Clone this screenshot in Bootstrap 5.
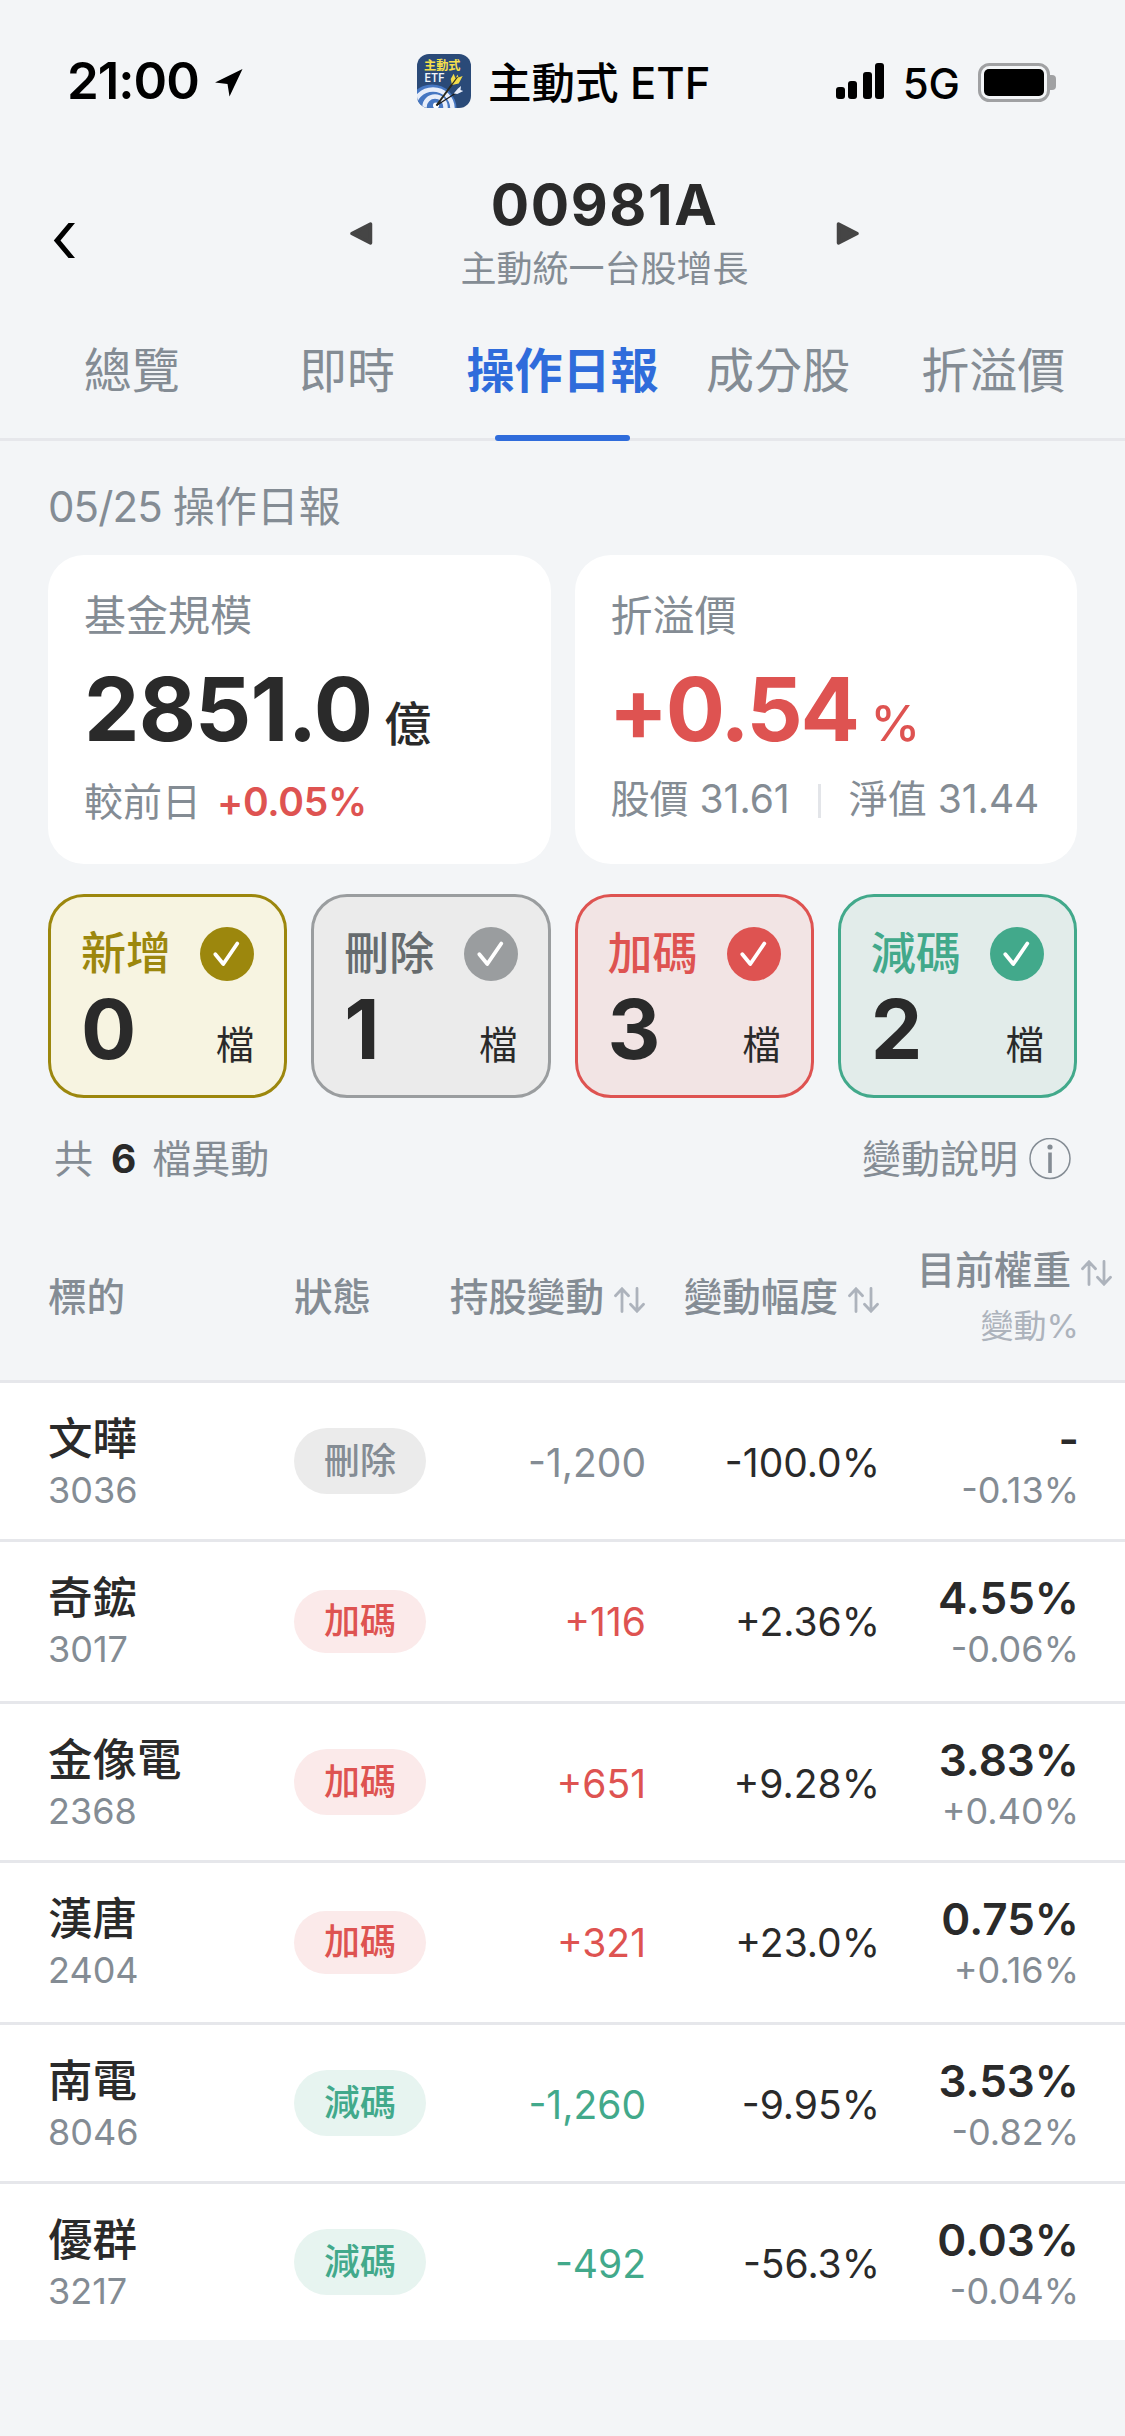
<!DOCTYPE html>
<html lang="zh-Hant">
<head>
<meta charset="utf-8">
<meta name="viewport" content="width=device-width, initial-scale=1">
<title>00981A 操作日報</title>
<link href="https://cdn.jsdelivr.net/npm/bootstrap@5.3.0/dist/css/bootstrap.min.css" rel="stylesheet">
<style>
:root{--ink:#2a2a2a;--muted:#848c94;--faint:#adb3bc;--line:#e6e7eb;--blue:#2f6cdb;--red:#de5351;--green:#42a98b}
body{width:1125px;min-height:2436px;background:#f3f5f7;color:var(--ink);font-family:Inter,"Noto Sans CJK TC",sans-serif;overflow-x:hidden}
svg{display:block;flex:none}
.tone-muted{color:var(--muted)}.tone-red{color:var(--red)}.tone-green{color:var(--green)}
.statusbar{height:162px;color:#000}
.clock{font-size:51px;font-weight:600;line-height:60px;width:130px;margin-left:67px;letter-spacing:-1px}
.locate{margin:4px 0 0 18px}
.appicon{margin-left:174px}
.appname{font-size:43.5px;font-weight:500;line-height:60px;margin:4px 0 0 17px}
.indicators{margin-right:69px}
.net{font-size:42px;font-weight:500;line-height:60px;margin:5px 18px 0 19px}
.battery{margin-top:2px}
.titlebar{height:142px}
.back{margin:61px 0 0 53px}
.prev{margin:60px 0 0 275px}
.next{margin:60px 266px 0 0}
.fundcode{font-size:57px;font-weight:700;line-height:62px;letter-spacing:1.6px}
.fundname{font-size:36px;line-height:50px;margin-top:8px;color:var(--muted)}
.tabs{height:137px;border-bottom:3px solid var(--line);padding:0 24px}
.tabs .nav-link{height:137px;padding:37px 0 0;font-size:48px;line-height:60px;color:var(--muted);position:relative;white-space:nowrap}
.tabs .nav-link.active{color:var(--blue);font-weight:700}
.tabs .nav-link.active::after{content:"";position:absolute;left:50%;bottom:0;width:135px;height:6px;margin-left:-68px;border-radius:3px;background:var(--blue)}
.page{padding:41px 48px 0}
.day{font-size:42px;line-height:50px;color:var(--muted);margin-bottom:23px}
.day-num{letter-spacing:-.9px}
.gap24{gap:24px}
.tiles{margin-top:30px}
.panel{height:309px;background:#fff;border-radius:36px;padding:37px 0 0 36px;flex:1 1 0;min-width:0}
.panel-label{font-size:42px;line-height:48px;color:var(--muted)}
.figure-num{height:90px;font-size:88px;font-weight:700;line-height:90px;margin-top:24px;letter-spacing:-.8px;white-space:nowrap}
.figure-num .unit{font-size:47px;font-weight:500;line-height:1;margin-left:12px;letter-spacing:0}
.premium{letter-spacing:-2.4px;margin-left:-2px}
.premium .unit{font-size:50px;margin-left:13px}
.sub{font-size:39px;line-height:48px;color:var(--muted);white-space:nowrap}
.sub-scale{margin-top:24px}
.sub-scale b{font-weight:600;color:var(--red);margin-left:16px;letter-spacing:-.3px}
.sub-price{margin-top:21px}
.sep{width:3px;height:34px;background:#e3e5e9;margin:3px 28px 0}
.tile{flex:1 1 0;height:204px;border:3px solid var(--c);background:var(--b);border-radius:36px;padding:30px 30px 0 30px}
.tile svg{color:var(--c)}
.tile-new{--c:#9c870d;--b:#f7f4e1}
.tile-del{--c:#9a9d9f;--b:#ebebeb;--t:#666b6e}
.tile-add{--c:#de5351;--b:#f2e4e4}
.tile-cut{--c:#42a98b;--b:#e2ecea}
.tile-label{font-size:45px;font-weight:500;line-height:54px;color:var(--t,var(--c))}
.tile-num{font-size:82px;font-weight:700;line-height:81px}
.tile-unit{font-size:38.5px;line-height:48px;padding-top:32px}
.summary{margin:37px 6px 0 6px}
.summary b{color:var(--ink);margin:0 16px 0 18px}
.info{margin-left:11px}
.thead-line{height:203px;border-bottom:3px solid var(--line);margin-top:-3px;padding:0 48px;font-size:38.6px;font-weight:500;line-height:48px;color:var(--muted)}
.head-mid{padding-top:93px}
.head-top{padding-top:66px}
.head-out{margin-right:-34px}
.head-sub{font-size:33px;line-height:40px;margin-top:12px;color:var(--faint)}
.sorter{margin:14px 0 0 10px}
.c1{width:246px}.c2{width:132px}.c3{width:220px}.c4{width:234px}.c5{width:199px}
.c1,.c2,.c3,.c4,.c5{flex:none;white-space:nowrap}
.line{height:159px;background:#fff;border-bottom:3px solid var(--line);padding:0 46px 0 48px}
.line:nth-child(odd){height:162px}
.line:last-child{height:156px;border:0}
.stock{font-size:44.5px;font-weight:500;line-height:50px;padding-top:31px}
.code{font-size:36px;line-height:44px;margin-top:4px;color:var(--muted)}
.pill{display:block;width:132px;height:66px;border-radius:33px;margin-top:45px;text-align:center;font-size:36px;font-weight:500;line-height:66px}
.line:nth-child(odd):not(:last-child) .pill{margin-top:48px;height:63px;line-height:63px}
.pill-del{background:#ebebeb;color:var(--muted)}.pill-add{background:#fbeaea;color:var(--red)}.pill-cut{background:#e7f4f0;color:var(--green)}
.val{font-size:39px;line-height:48px;padding-top:56px;text-align:right}
.wt{font-size:44px;font-weight:600;line-height:50px;padding-top:31px;text-align:right}
</style>
</head>
<body>
<svg width="0" height="0" class="position-absolute">
<symbol id="tick" viewBox="0 0 54 54"><circle cx="27" cy="27" r="27" fill="currentColor"/><path d="M15.3 27.2 23.3 37 37.3 16.5" fill="none" stroke="#fff" stroke-width="3.8" stroke-linecap="round" stroke-linejoin="round"/></symbol>
<symbol id="sort" viewBox="0 0 32 26"><path d="M8 24.500V2M1.500 8.800 8 1.800l6.500 7M23 1.500V24M16.500 17.200 23 24.200l6.500-7" fill="none" stroke="#adb3bc" stroke-width="2.800" stroke-linecap="round"/></symbol>
</svg>

<header class="statusbar d-flex align-items-center">
  <div class="clock">21:00</div>
  <svg class="locate" width="28" height="28" viewBox="0 0 28 28"><path d="M27.500 0 0 13.500 12.500 15 14.500 27.500z"/></svg>
  <svg class="appicon" width="54" height="54" viewBox="0 0 54 54"><defs><clipPath id="ico"><rect width="54" height="54" rx="12"/></clipPath></defs>
    <g clip-path="url(#ico)"><rect width="54" height="54" fill="#2a4a78"/>
    <circle cx="15" cy="55" r="24.500" fill="#4677c2"/><circle cx="16" cy="55" r="19.500" fill="none" stroke="#e8eefa" stroke-width="4.500"/><circle cx="18" cy="53" r="10.500" fill="none" stroke="#e8eefa" stroke-width="4.500"/><circle cx="19" cy="51.500" r="3" fill="#fff"/>
    <path d="M19.500 51.500 39 25" stroke="#2b2a1c" stroke-width="2"/><path d="M19.500 51.500 42 37" stroke="#1d1d1d" stroke-width="1.300"/>
    <path d="M36.700 19.700 38.500 24.500 40.500 20.500 41.500 23.500 45.700 22 41.700 29.500 35 31 33.700 25z" fill="#f4dd4a"/><path d="M44 32 43.500 36 46.300 37 40.300 40 36.700 39.500 41 34.500z" fill="#e8eefa"/>
    <path d="M33 33.200 40.500 23" stroke="#2b2a1c" stroke-width="1.200"/>
    <text x="7" y="15.500" font-size="12.200" font-weight="700" fill="#f7e04b">主動式</text><text x="7.500" y="27.500" font-size="12" font-weight="600" fill="#f2f5fa" textLength="20" lengthAdjust="spacingAndGlyphs">ETF</text></g></svg>
  <div class="appname">主動式 ETF</div>
  <div class="indicators d-flex align-items-center ms-auto">
    <svg width="48" height="36" viewBox="0 0 48 36"><rect y="24" width="9" height="12" rx="3"/><rect x="12" y="18" width="9" height="18" rx="3"/><rect x="27" y="9" width="9" height="27" rx="3"/><rect x="39" width="9" height="36" rx="3"/></svg>
    <div class="net">5G</div>
    <svg class="battery" width="78" height="39" viewBox="0 0 78 39"><rect x="1.500" y="1.500" width="69" height="36" rx="10" fill="none" stroke="#a0a1a3" stroke-width="3"/><rect x="6" y="6" width="60" height="27" rx="5"/><path d="M72 12h2q4 0 4 4v7q0 4-4 4h-2z" fill="#a0a1a3"/></svg>
  </div>
</header>

<div class="titlebar d-flex">
  <svg class="back" width="22" height="36" viewBox="0 0 22 36"><path d="M15.500 0H22L7.500 17.500 22 35H15.500L.8 17.500z"/></svg>
  <svg class="prev" width="23" height="23" viewBox="0 0 23 23"><path d="M20.500 2v19L2 11.500z" fill="#454545" stroke="#454545" stroke-width="3.500" stroke-linejoin="round"/></svg>
  <div class="text-center flex-fill pt-2"><div class="fundcode mt-1">00981A</div><div class="fundname">主動統一台股增長</div></div>
  <svg class="next" width="23" height="23" viewBox="0 0 23 23"><path d="M2.500 2v19L21 11.500z" fill="#454545" stroke="#454545" stroke-width="3.500" stroke-linejoin="round"/></svg>
</div>

<nav class="tabs nav nav-fill nav-justified flex-nowrap">
  <a class="nav-link">總覽</a><a class="nav-link">即時</a><a class="nav-link active">操作日報</a><a class="nav-link">成分股</a><a class="nav-link">折溢價</a>
</nav>

<main>
<section class="page">
  <div class="day"><span class="day-num">05/25 </span>操作日報</div>
  <div class="d-flex gap24">
    <div class="panel">
      <div class="panel-label">基金規模</div>
      <div class="figure-num">2851.0<span class="unit">億</span></div>
      <div class="sub sub-scale">較前日<b>+0.05%</b></div>
    </div>
    <div class="panel">
      <div class="panel-label">折溢價</div>
      <div class="figure-num premium tone-red">+0.54<span class="unit">%</span></div>
      <div class="sub sub-price d-flex align-items-center"><span>股價 31.61</span><i class="sep"></i><span>淨值 31.44</span></div>
    </div>
  </div>
  <div class="tiles d-flex gap24">
    <div class="tile tile-new"><div class="d-flex justify-content-between"><span class="tile-label">新增</span><svg width="54" height="54"><use href="#tick"/></svg></div><div class="d-flex justify-content-between mt-2"><span class="tile-num">0</span><span class="tile-unit">檔</span></div></div>
    <div class="tile tile-del"><div class="d-flex justify-content-between"><span class="tile-label">刪除</span><svg width="54" height="54"><use href="#tick"/></svg></div><div class="d-flex justify-content-between mt-2"><span class="tile-num">1</span><span class="tile-unit">檔</span></div></div>
    <div class="tile tile-add"><div class="d-flex justify-content-between"><span class="tile-label">加碼</span><svg width="54" height="54"><use href="#tick"/></svg></div><div class="d-flex justify-content-between mt-2"><span class="tile-num">3</span><span class="tile-unit">檔</span></div></div>
    <div class="tile tile-cut"><div class="d-flex justify-content-between"><span class="tile-label">減碼</span><svg width="54" height="54"><use href="#tick"/></svg></div><div class="d-flex justify-content-between mt-2"><span class="tile-num">2</span><span class="tile-unit">檔</span></div></div>
  </div>
  <div class="sub summary d-flex align-items-center"><span>共</span><b>6</b><span>檔異動</span>
    <span class="ms-auto">變動說明</span><svg class="info" width="42" height="42" viewBox="0 0 42 42"><circle cx="21" cy="20.500" r="20" fill="none" stroke="#848c94" stroke-width="1.500"/><circle cx="21" cy="9" r="2.600" fill="#848c94"/><path d="M21 14.500V35" stroke="#848c94" stroke-width="3.600"/></svg></div>
</section>

<section>
  <div class="thead-line d-flex">
    <div class="c1 head-mid">標的</div>
    <div class="c2 head-mid">狀態</div>
    <div class="c3 head-mid d-flex justify-content-end">持股變動<svg class="sorter" width="32" height="26"><use href="#sort"/></svg></div>
    <div class="c4 head-mid d-flex justify-content-end">變動幅度<svg class="sorter" width="32" height="26"><use href="#sort"/></svg></div>
    <div class="c5 head-top"><div class="head-out d-flex justify-content-end">目前權重<svg class="sorter" width="32" height="26"><use href="#sort"/></svg></div>
      <div class="head-sub text-end fw-normal">變動%</div></div>
  </div>
  <div class="line d-flex"><div class="c1"><div class="stock">文曄</div><div class="code">3036</div></div><div class="c2"><span class="pill pill-del">刪除</span></div><div class="c3 val tone-muted">-1,200</div><div class="c4 val">-100.0%</div><div class="c5 text-end"><div class="wt">-</div><div class="code">-0.13%</div></div></div>
  <div class="line d-flex"><div class="c1"><div class="stock">奇鋐</div><div class="code">3017</div></div><div class="c2"><span class="pill pill-add">加碼</span></div><div class="c3 val tone-red">+116</div><div class="c4 val">+2.36%</div><div class="c5 text-end"><div class="wt">4.55%</div><div class="code">-0.06%</div></div></div>
  <div class="line d-flex"><div class="c1"><div class="stock">金像電</div><div class="code">2368</div></div><div class="c2"><span class="pill pill-add">加碼</span></div><div class="c3 val tone-red">+651</div><div class="c4 val">+9.28%</div><div class="c5 text-end"><div class="wt">3.83%</div><div class="code">+0.40%</div></div></div>
  <div class="line d-flex"><div class="c1"><div class="stock">漢唐</div><div class="code">2404</div></div><div class="c2"><span class="pill pill-add">加碼</span></div><div class="c3 val tone-red">+321</div><div class="c4 val">+23.0%</div><div class="c5 text-end"><div class="wt">0.75%</div><div class="code">+0.16%</div></div></div>
  <div class="line d-flex"><div class="c1"><div class="stock">南電</div><div class="code">8046</div></div><div class="c2"><span class="pill pill-cut">減碼</span></div><div class="c3 val tone-green">-1,260</div><div class="c4 val">-9.95%</div><div class="c5 text-end"><div class="wt">3.53%</div><div class="code">-0.82%</div></div></div>
  <div class="line d-flex"><div class="c1"><div class="stock">優群</div><div class="code">3217</div></div><div class="c2"><span class="pill pill-cut">減碼</span></div><div class="c3 val tone-green">-492</div><div class="c4 val">-56.3%</div><div class="c5 text-end"><div class="wt">0.03%</div><div class="code">-0.04%</div></div></div>
</section>
</main>
<script src="https://cdn.jsdelivr.net/npm/bootstrap@5.3.0/dist/js/bootstrap.bundle.min.js"></script>
</body>
</html>
